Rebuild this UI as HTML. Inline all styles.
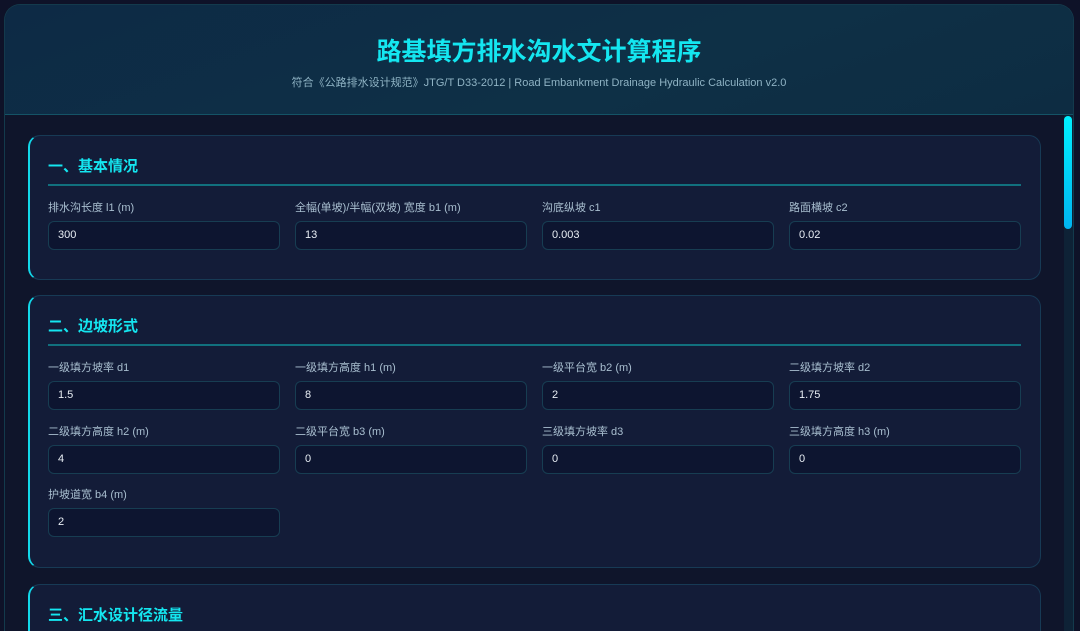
<!DOCTYPE html>
<html><head><meta charset="utf-8"><style>
*{box-sizing:border-box;margin:0;padding:0}
html,body{width:1080px;height:631px;overflow:hidden}
body{background:#0e1228;font-family:"Liberation Sans","Noto Sans CJK SC",sans-serif;position:relative}
.wrap{position:absolute;left:4px;top:4px;width:1070px;height:627px;border-radius:16px 16px 0 0;overflow:hidden;background:#0f152b;border:1px solid #133a4c;border-bottom:none}
.hdr{position:absolute;left:0;top:0;width:100%;height:110px;background:linear-gradient(160deg,#0d2a45,#0e3046 60%,#0d2c42);border-bottom:1px solid #145366}
.hdr h1{position:absolute;top:27px;left:0;width:100%;text-align:center;font-size:25px;font-weight:bold;color:#14e6f0;font-family:"Noto Sans CJK SC",sans-serif}
.hdr p{position:absolute;top:69px;left:0;width:100%;text-align:center;font-size:11px;color:#8fb3c4}
.sb{position:absolute;left:1059px;top:110px;width:9px;height:530px;background:#0e2236}
.th{position:absolute;left:1059px;top:111px;width:8px;height:113px;border-radius:4px;background:linear-gradient(#00f0ff,#00b4f0)}
.card{position:absolute;left:23px;width:1013px;background:#131c38;border:1px solid #173a55;border-left:2px solid #12d8ea;border-radius:12px}
.card h2{position:absolute;left:18px;top:19px;font-size:15px;font-weight:bold;color:#14e6f0;font-family:"Noto Sans CJK SC",sans-serif}
.card .ln{position:absolute;left:18px;right:19px;top:48px;height:2px;background:#11707e}
.f{position:absolute;width:232px}
.f label{display:block;font-size:11px;color:#a9bfd0;height:13px;line-height:13px;white-space:nowrap}
.f div{margin-top:6px;height:29px;border:1px solid #173d52;border-radius:6px;background:#0d1530;color:#e8eef4;font-size:11px;line-height:27px;padding-left:9px}
</style></head><body>
<div class="wrap">
<div class="hdr"><h1>路基填方排水沟水文计算程序</h1><p>符合《公路排水设计规范》JTG/T D33-2012 | Road Embankment Drainage Hydraulic Calculation v2.0</p></div>
<div class="card" style="top:130px;height:145px">
<h2>一、基本情况</h2><div class="ln"></div>
<div class="f" style="left:18px;top:66px"><label>排水沟长度 l1 (m)</label><div>300</div></div>
<div class="f" style="left:265px;top:66px"><label>全幅(单坡)/半幅(双坡) 宽度 b1 (m)</label><div>13</div></div>
<div class="f" style="left:512px;top:66px"><label>沟底纵坡 c1</label><div>0.003</div></div>
<div class="f" style="left:759px;top:66px"><label>路面横坡 c2</label><div>0.02</div></div>
</div>
<div class="card" style="top:290px;height:273px">
<h2>二、边坡形式</h2><div class="ln"></div>
<div class="f" style="left:18px;top:66px"><label>一级填方坡率 d1</label><div>1.5</div></div>
<div class="f" style="left:265px;top:66px"><label>一级填方高度 h1 (m)</label><div>8</div></div>
<div class="f" style="left:512px;top:66px"><label>一级平台宽 b2 (m)</label><div>2</div></div>
<div class="f" style="left:759px;top:66px"><label>二级填方坡率 d2</label><div>1.75</div></div>
<div class="f" style="left:18px;top:130px"><label>二级填方高度 h2 (m)</label><div>4</div></div>
<div class="f" style="left:265px;top:130px"><label>二级平台宽 b3 (m)</label><div>0</div></div>
<div class="f" style="left:512px;top:130px"><label>三级填方坡率 d3</label><div>0</div></div>
<div class="f" style="left:759px;top:130px"><label>三级填方高度 h3 (m)</label><div>0</div></div>
<div class="f" style="left:18px;top:193px"><label>护坡道宽 b4 (m)</label><div>2</div></div>
</div>
<div class="card" style="top:579px;height:120px">
<h2>三、汇水设计径流量</h2>
</div>
<div class="sb"></div><div class="th"></div>
</div>
</body></html>
